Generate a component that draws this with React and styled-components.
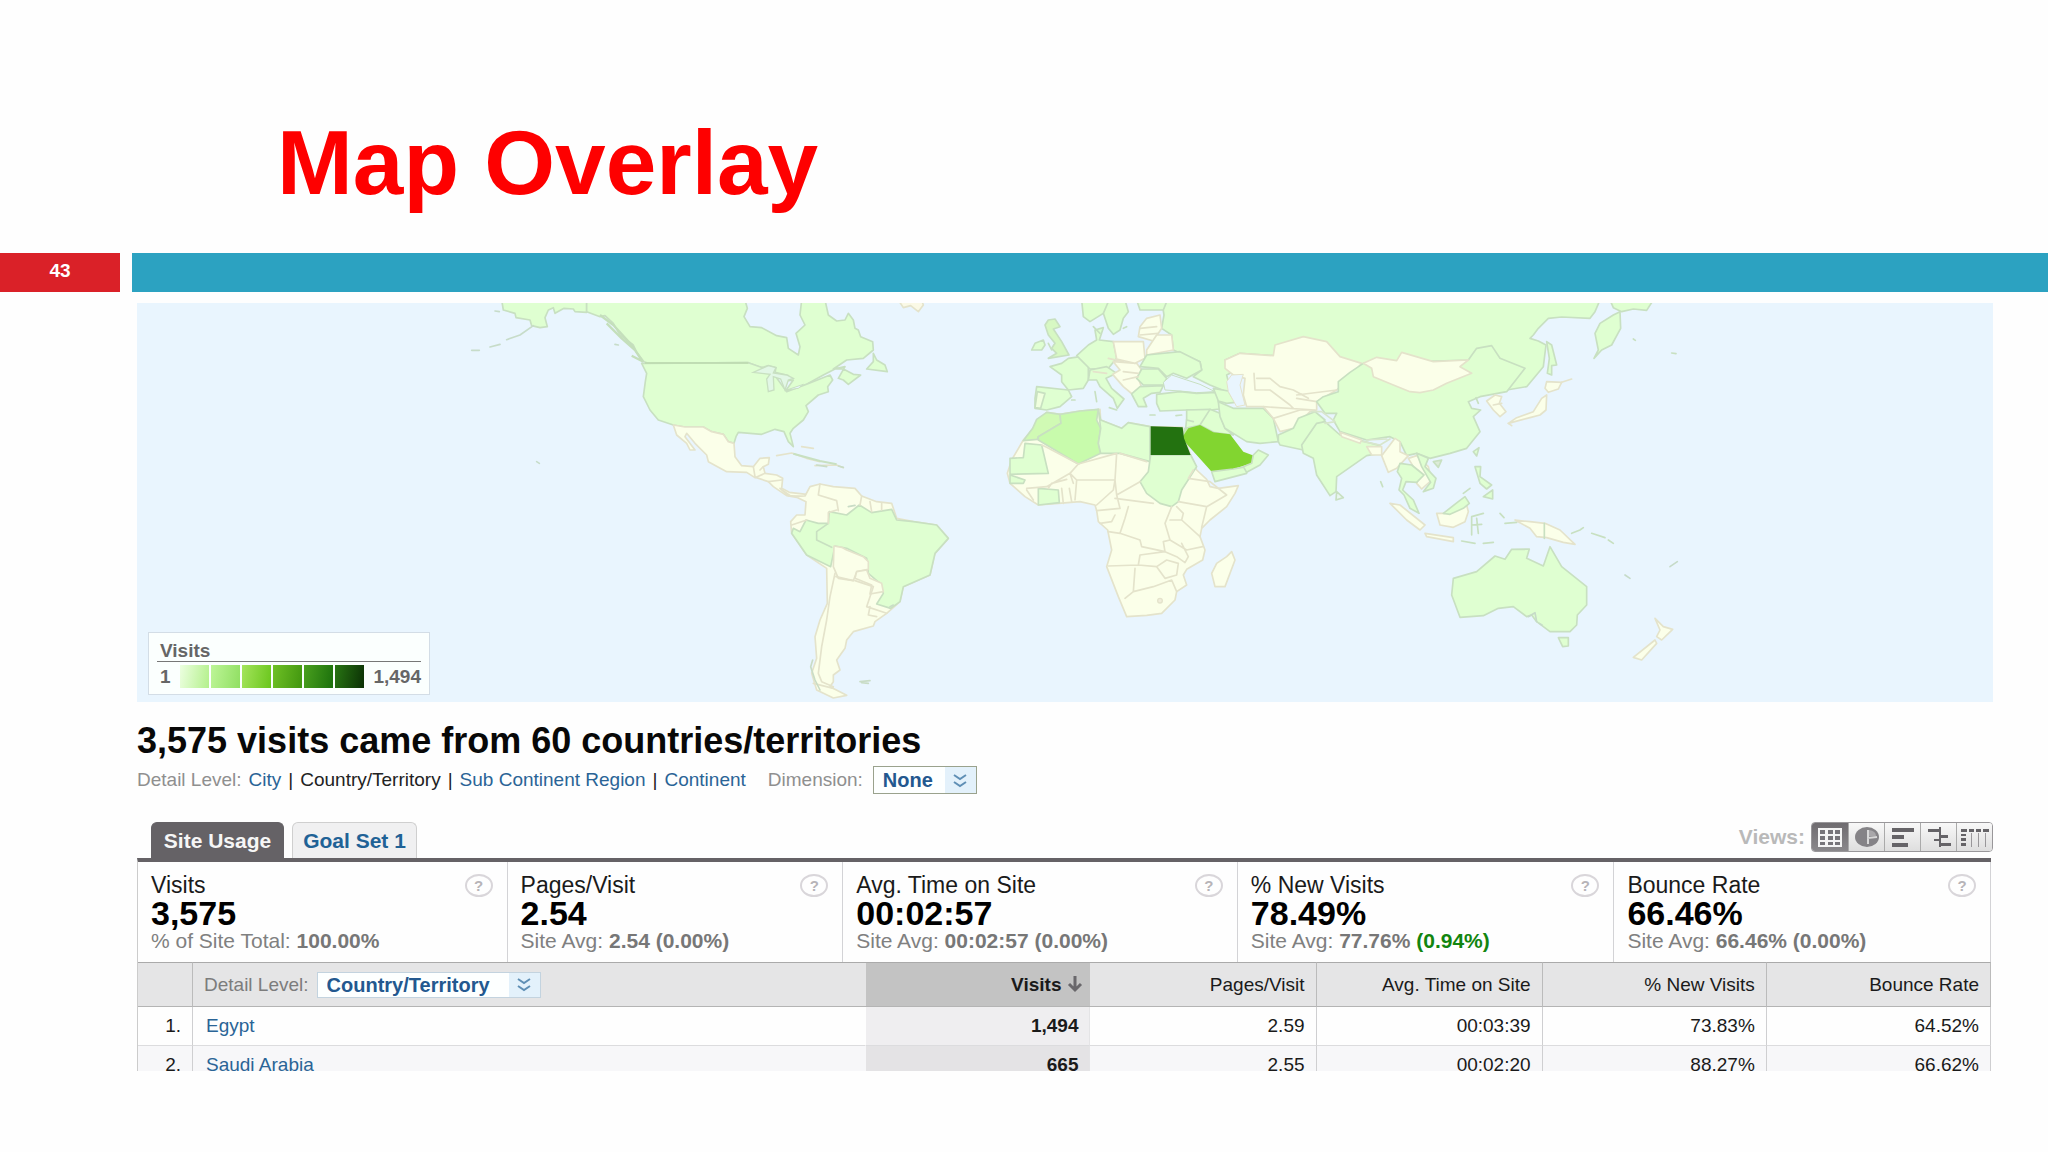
import React from "react";
import styled, { createGlobalStyle } from "styled-components";

const GlobalStyle = createGlobalStyle`
  *, *::before, *::after { box-sizing: border-box; }
  body { margin: 0; background: #fefefe; color: #1a1a1a; font-family: "Liberation Sans", Arial, sans-serif; }
  button, select { font: inherit; }
`;

const Title = styled.h1`
  margin: 0;
  padding: 111px 0 38px 277px;
  font-weight: 700;
  font-size: 91px;
  line-height: 104px;
  color: #fe0000;
`;

const Ribbon = styled.div`
  display: grid;
  grid-template-columns: 120px 1fr;
  gap: 12px;
  height: 39px;
`;

const PageNumber = styled.div`
  background: #da2128;
  color: #fff;
  padding-top: 7px;
  text-align: center;
  font-weight: 700;
  font-size: 19px;
  line-height: 22px;
`;

const RibbonBar = styled.div`
  background: #2ca2c1;
`;

const Report = styled.main`
  padding: 11px 55px 0 137px;
`;

const MapFrame = styled.section`
  display: grid;
  background: #e9f5fe;
  & > * { grid-area: 1 / 1; }
`;

const MapDrawing = styled.svg`
  display: block;
  width: 100%;
  height: auto;
`;

const Legend = styled.div`
  align-self: end;
  justify-self: start;
  width: 282px;
  margin: 0 0 7px 11px;
  padding: 8px 8px 6px;
  background: #fbfffe;
  border: 1px solid #d3dde6;
  color: #666;
  font-weight: 700;
  font-size: 19px;
  line-height: 20px;
`;

const LegendTitle = styled.div`
  padding: 0 3px;
  border-bottom: 1px solid #777;
`;

const LegendScale = styled.div`
  display: flex;
  align-items: center;
  justify-content: space-between;
  padding: 3px 0 0 3px;
`;

const Swatches = styled.div`
  display: flex;
  gap: 2px;
`;

const Swatch = styled.span`
  width: 29px;
  height: 23px;
  background: linear-gradient(100deg, ${(p) => p.$from}, ${(p) => p.$to});
`;

const Headline = styled.h2`
  margin: 20px 0 0;
  font-size: 36px;
  line-height: 38px;
  font-weight: 700;
  color: #080808;
`;

const DetailBar = styled.nav`
  display: flex;
  align-items: center;
  height: 28px;
  margin-top: 6px;
  gap: 7px;
  font-size: 19px;
  line-height: 20px;
  color: #222;
`;

const Muted = styled.span`
  color: #8f8f8f;
`;

const Link = styled.a`
  color: #2a6496;
  text-decoration: none;
`;

const Dimension = styled.label`
  display: flex;
  align-items: center;
  gap: 10px;
  margin-left: 15px;
  color: #8f8f8f;
`;

const SelectBox = styled.span`
  display: inline-grid;
  grid-template-columns: 1fr 31px;
  align-items: stretch;
  width: ${(p) => p.$width};
  height: ${(p) => p.$height};
  border: ${(p) => p.$border};
  background: linear-gradient(to left, #e3f1fb 31px, #fdffff 31px);
  & > select {
    grid-area: 1 / 1 / 2 / 3;
    appearance: none;
    border: 0;
    padding: 0 31px 0 9px;
    background: transparent;
    color: #23588f;
    font-weight: 700;
    font-size: 20px;
    line-height: 22px;
  }
  & > svg {
    grid-area: 1 / 2;
    place-self: center;
    pointer-events: none;
  }
`;

const TabBar = styled.div`
  display: flex;
  align-items: flex-start;
  justify-content: space-between;
  height: 36px;
  margin: 28px 0 0;
  padding-left: 14px;
`;

const Tabs = styled.div`
  display: flex;
  gap: 8px;
`;

const Tab = styled.button`
  width: ${(p) => (p.$active ? "133px" : "125px")};
  height: 36px;
  padding: 0;
  border: 1px solid ${(p) => (p.$active ? "#656266" : "#cfcfcf")};
  border-bottom: 0;
  border-radius: 6px 6px 0 0;
  background: ${(p) => (p.$active ? "#656266" : "#f0f0f1")};
  color: ${(p) => (p.$active ? "#f6f6f6" : "#1f6296")};
  font-weight: 700;
  font-size: 21px;
`;

const Views = styled.div`
  display: flex;
  align-items: center;
  gap: 6px;
  font-weight: 700;
  font-size: 21px;
  color: #b9b9b9;
`;

const ViewButtons = styled.div`
  display: flex;
  border: 1px solid #99979a;
  border-radius: 4px;
  overflow: hidden;
`;

const ViewButton = styled.button`
  display: grid;
  place-items: center;
  width: 36px;
  height: 28px;
  padding: 0;
  border: 0;
  border-left: ${(p) => (p.$first ? "0" : "1px solid #aaa")};
  background: ${(p) => (p.$active ? "linear-gradient(#6f6c70, #8a888b)" : "linear-gradient(#f8f8f8, #dedede)")};
`;

const DataPanel = styled.section`
  margin-right: 2px;
`;

const Cards = styled.div`
  display: grid;
  grid-template-columns: 370fr 336fr 395fr 377fr 377fr;
  height: 104px;
  border-top: 4px solid #656266;
  border-left: 1px solid #ccc;
`;

const Card = styled.article`
  display: grid;
  grid-template-columns: 1fr 28px;
  align-content: start;
  align-items: center;
  padding: 11px 14px 0 13px;
  border-right: 1px solid #d3d3d6;
  white-space: nowrap;
`;

const CardLabel = styled.div`
  font-size: 23px;
  line-height: 25px;
`;

const CardValue = styled.div`
  grid-column: 1 / 3;
  font-size: 34px;
  line-height: 30px;
  font-weight: 700;
  color: #000;
`;

const CardNote = styled.div`
  grid-column: 1 / 3;
  font-size: 21px;
  line-height: 26px;
  color: #808080;
`;

const Strong = styled.b`
  font-weight: 700;
  color: ${(p) => (p.$good ? "#12850f" : "#777")};
`;

const HelpButton = styled.button`
  width: 28px;
  height: 23px;
  padding: 0;
  border: 2px solid #d9d6da;
  border-radius: 50%;
  background: none;
  color: #b7b4b8;
  font-weight: 700;
  font-size: 15px;
  line-height: 18px;
`;

const TableClip = styled.div`
  max-height: 109px;
  overflow: hidden;
`;

const Table = styled.table`
  width: 100%;
  table-layout: fixed;
  border-collapse: separate;
  border-spacing: 0;
  border-left: 1px solid #ccc;
  font-size: 19px;
  line-height: 20px;
`;

const Col = styled.col`
  width: ${(p) => p.$width};
`;

const HeadCell = styled.th`
  height: 45px;
  padding: 0 11px;
  text-align: ${(p) => (p.$left ? "left" : "right")};
  font-weight: ${(p) => (p.$sorted ? 700 : 400)};
  background: ${(p) => (p.$sorted ? "#c3c3c3" : "#e5e5e6")};
  border-top: 1px solid #aaa;
  border-bottom: 1px solid #b4b4b4;
  border-right: ${(p) => (p.$divided ? "1px solid #bbb" : "0")};
  white-space: nowrap;
`;

const SortedLabel = styled.span`
  display: inline-flex;
  align-items: center;
  gap: 6px;
  margin-right: -4px;
`;

const DetailPicker = styled.label`
  display: flex;
  align-items: center;
  gap: 8px;
  color: #7c7c7c;
`;

const Cell = styled.td`
  height: 39px;
  padding: 0 11px;
  text-align: right;
  font-weight: ${(p) => (p.$sorted ? 700 : 400)};
  background: ${(p) => (p.$sorted ? (p.$odd ? "#e4e3e5" : "#efeef0") : p.$odd ? "#f7f7f9" : "#fefefe")};
  border-bottom: 1px solid #dcdcde;
  border-right: 1px solid ${(p) => (p.$sorted ? "#e4e4e6" : "#cfcfd1")};
`;

const PlaceCell = styled(Cell)`
  padding-left: 13px;
  text-align: left;
  border-right-color: transparent;
`;

const GREEN = "#dfffd1";
const PALE = "#fbffe9";
const EDGE = "#c8e0c1";
const SAND = "#e4e3cb";

const Land = ({ d, fill = GREEN, stroke }) => (
  <path d={d} fill={fill} stroke={stroke || (fill === PALE ? SAND : EDGE)} strokeWidth="5" strokeLinejoin="round" />
);
const Border = ({ d, stroke = SAND }) => (
  <path d={d} fill="none" stroke={stroke} strokeWidth="5" strokeLinejoin="round" strokeLinecap="round" />
);
const Region = ({ x, y, children }) => <g transform={`translate(${x} ${y}) scale(0.33333)`}>{children}</g>;

function NorthAmerica() {
  return (
    <Region x={440} y={295}>
      <Land d="M185 15L190 45L225 55L228 68L270 75L275 92L300 98L322 95L315 68L325 45L340 38L345 55L372 40L400 42L405 50L440 52L440 15Z" />
      <Land d="M440 15L440 50L480 65L495 62L520 85L540 120L580 150L590 172L612 200L625 205L925 203L965 218L985 212L1008 218L1005 232L1045 242L1040 258L1060 255L1035 290L1100 268L1150 240L1185 222L1210 222L1240 238L1262 240L1225 268L1210 255L1195 250L1215 215L1180 222L1220 195L1270 190L1300 165L1298 140L1262 125L1255 105L1245 100L1240 75L1225 55L1215 75L1190 78L1165 60L1155 15L1085 15L1080 60L1095 90L1068 115L1080 155L1075 180L1045 160L1040 128L1010 122L965 98L930 95L912 65L922 40L915 15Z" />
      <Land d="M605 205L925 203L968 218L1000 235L1040 290L1100 268L1170 240L1178 255L1163 275L1165 290L1135 300L1098 332L1105 350L1090 375L1060 400L1050 415L1060 455L1045 440L1032 410L1005 403L965 418L895 412L888 425L882 445L865 440L850 418L815 410L790 396L735 396L700 390L655 375L630 345L610 305L616 260L620 235Z" />
      <Land d="M1300 175L1310 195L1335 210L1342 230L1280 222L1300 200Z" />
      <path d="M940 232L985 212L1008 218L1000 234L1040 240L1060 250L1045 255L1035 285L1022 252L1000 245L1002 285L985 290L980 252L990 238Z" fill="#e2f7e6" stroke={EDGE} strokeWidth="4" />
      <path d="M1040 285L1090 268L1075 280Z" fill="#e9f5fe" stroke={EDGE} strokeWidth="3" />
      <path d="M615 204H925" stroke="#bddbae" strokeWidth="5" />
      <path d="M480 60L520 90L575 150L608 200M500 85L545 130L585 165M575 182L610 200" fill="none" stroke="#c4dfbb" strokeWidth="7" strokeLinejoin="round" />
      <Border d="M280 92L240 120L200 134M180 148L150 156M118 166L95 166M178 50L165 48M290 500L298 505M525 148L535 150" stroke="#c7dcc9" />
      <Land fill={PALE} d="M700 390L735 396L790 396L815 410L850 418L865 440L882 445L885 485L905 512L940 515L960 490L988 488L985 508L970 515L975 535L1010 540L1028 550L1025 580L1048 592L1100 598L1095 605L1040 602L1000 575L985 560L940 545L920 532L860 530L805 500L800 480L765 445L740 415L735 425L765 465L750 465L740 445L710 420Z" />
      <Border d="M940 515L945 545M975 535L945 548M960 525L970 515M985 560L1025 555M1010 482L1055 474L1100 490L1140 500M1125 512L1190 510L1210 518M1085 455L1120 460" />
      <path d="M1060 476L1140 498L1190 508" fill="none" stroke={EDGE} strokeWidth="6" />
      <Land fill="#faf9e6" stroke={SAND} d="M1375 15L1390 38L1412 32L1435 50L1450 30L1445 15Z" />
    </Region>
  );
}

function SouthAmerica() {
  return (
    <Region x={700} y={460}>
      <Land fill={PALE} d="M240 85L275 110L315 108L330 80L360 72L400 80L465 85L485 108L530 125L575 130L590 175L640 185L710 195L745 235L705 280L690 345L610 380L600 425L560 460L525 485L520 498L460 515L440 540L435 565L410 600L420 630L400 645L400 665L390 680L440 706L400 714L350 690L335 640L350 595L345 530L360 480L382 430L380 325L320 285L275 220L272 185L290 165L315 165L318 125L290 112L265 108Z" />
      <Land d="M318 180L355 190L385 190L388 155L440 165L478 135L515 158L575 148L590 180L640 185L710 195L745 235L705 280L690 345L610 380L600 425L572 445L530 432L550 400L540 370L505 340L500 295L440 265L405 258L392 320L320 285L275 220L280 205L300 215Z" />
      <Land fill={PALE} d="M402 258L425 262L440 270L490 290L505 305L505 328L470 335L460 362L415 355L400 320Z" />
      <Land fill={PALE} d="M470 335L500 330L510 355L545 370L550 395L510 402L515 375L465 355Z" />
      <Border d="M385 190L350 215L350 240L395 262" stroke={EDGE} />
      <Border d="M360 72L355 105L410 122L415 152M385 190L385 158L410 150M485 108L480 135M510 125L515 155M545 130L545 150M275 195L320 180M405 340L390 410L380 480L365 560L355 640L365 665L400 680M408 350L460 362M465 362L520 380L500 440L560 460M510 440L505 465L530 470M340 670L400 685" />
      <Border d="M338 600L332 620L345 660L360 690M480 665L510 662M485 668L505 670M445 140L465 136M350 15L380 20M415 18L430 22M570 440L580 435" stroke="#c9dcc6" />
    </Region>
  );
}

function Africa() {
  return (
    <Region x={980} y={440}>
      <Land fill={PALE} d="M200 -83L240 -77L300 -87L360 -92L362 -60L400 -45L425 -35L445 -52L510 -40L608 -38L612 -5L632 45L650 90L680 118L690 140L715 145L775 137L765 160L740 200L690 240L665 265L660 290L675 330L668 360L620 388L610 405L620 435L590 455L585 480L545 520L500 526L440 530L415 470L380 380L395 330L383 270L355 245L350 212L345 195L300 185L235 190L175 195L135 170L90 130L82 100L95 60L130 0L160 -35Z" />
      <Land fill="#d0fab4" d="M200 -83L240 -77L243 -50L175 -10L172 -2L130 2L158 -35L170 -62Z" />
      <Land fill="#c8fbac" d="M240 -77L300 -87L355 -92L350 -60L362 -35L355 10L362 40L295 72L175 0L175 -10L243 -50Z" />
      <Land d="M355 -92L362 -60L400 -45L425 -35L445 -52L510 -40L510 65L420 40L362 40L355 10L362 -35Z" />
      <Land d="M135 10L185 15L205 100L90 103L90 55L130 53Z" />
      <Land d="M90 105L135 120L130 130L90 130Z" />
      <Land d="M175 145L235 150L238 188L175 195Z" />
      <Land d="M512 45L632 45L650 80L605 150L595 185L575 200L540 190L500 160L480 125L505 95Z" />
      <Border d="M185 15L200 22L295 72L270 100L200 140L140 145M295 72L410 40L405 120L290 120L270 100L280 130M420 40L500 65M480 125L410 165L405 120M290 120L285 180M350 195L400 150L405 120M410 165L420 205L350 212M405 175L520 190M445 200L435 235L420 280L385 275M360 250L395 245L405 225M420 280L480 300L485 320L555 335L550 305L570 300L555 250L575 200M590 200L610 220L605 240L570 240M595 185L680 200L740 165L690 125L625 115L640 90M680 200L665 262M605 240L660 290M570 300L620 330L668 320M555 335L480 345L475 375L385 378M475 375L530 380L560 360L595 370L590 405L555 415L530 380M465 385L460 455L520 440L575 420L590 455M460 455L435 475M605 310L625 350L615 368L590 350L555 335M245 145L250 190M268 145L275 185M205 145L215 130L260 118M140 150L160 180" />
      <circle cx="540" cy="482" r="7" fill="#f1eedb" stroke={SAND} strokeWidth="4" />
      <Land fill={PALE} d="M755 335L765 360L735 440L705 440L695 400L710 370L740 350Z" />
    </Region>
  );
}

function EuropeAndMiddleEast() {
  return (
    <Region x={980} y={295}>
      <Land d="M545 15L552 60L545 100L575 120L580 165L660 200L665 225L640 245L690 270L740 290L760 320L740 240L750 235L735 195L780 175L880 182L900 170L1040 160L1150 235L1400 240L1580 260L1580 285L1640 275L1690 215L1698 150L1675 138L1650 130L1660 120L1675 100L1705 70L1745 66L1830 70L1845 50L1860 15Z" />
      <Land d="M205 75L225 72L240 95L220 102L245 140L267 180L205 190L230 175L215 160L225 145L205 120L195 90Z" fill="#d7f8c3" />
      <Land d="M165 145L190 135L195 150L185 165L155 165Z" />
      <Land d="M305 15L310 65L330 80L370 55L385 100L400 118L420 105L430 70L445 50L435 15Z" />
      <Border d="M370 55L385 20" stroke={EDGE} />
      <Land d="M470 15L480 45L550 45L562 15Z" />
      <Land d="M170 275L265 285L275 305L240 335L200 345L165 340L165 310Z" />
      <Land fill="#f0ffdf" d="M172 290L195 295L182 340L165 338Z" />
      <Land d="M265 285L245 260L245 240L210 215L245 205L265 190L300 185L325 200L325 255L310 280Z" />
      <Land d="M290 182L325 150L350 135L345 105L370 98L358 135L400 140L410 190L385 220L330 222Z" />
      <Land d="M330 225L380 215L410 235L378 250L395 280L432 312L412 340L400 310L360 275L350 255L325 255Z" />
      <Land fill={PALE} d="M400 200L470 205L485 225L475 250L490 292L460 300L430 275L398 238L420 225Z" />
      <Land fill={PALE} d="M400 140L490 140L495 190L465 205L410 192Z" />
      <Land fill={PALE} d="M500 70L540 60L545 100L520 138L475 125L480 95Z" />
      <Land fill={PALE} d="M500 165L530 120L575 120L580 165L500 180Z" />
      <Land d="M500 180L600 170L660 200L665 225L620 250L580 235L560 245L535 220L480 215Z" />
      <Land d="M485 222L535 222L560 250L550 270L490 270L470 250Z" />
      <Land d="M455 297L480 275L550 272L540 292L515 295L490 310L500 335L475 335Z" />
      <Border d="M480 100L530 95M480 120L535 115M385 190L430 200M430 230L475 235M430 255L475 245M340 230L380 235" />
      <Border d="M345 290L350 320M388 338L410 345M510 360L525 360M588 362L605 360M340 95L360 115M275 315L285 315M430 100L440 95M205 145L215 165" stroke={EDGE} />
      <path d="M555 285L550 262L575 240L620 255L660 268L705 290L650 293L600 288Z" fill="#e9f5fe" stroke={EDGE} strokeWidth="3" />
      <Land d="M530 298L600 290L650 295L710 292L720 342L690 345L620 345L540 348L530 325Z" />
      <Land d="M700 280L745 288L765 322L740 325L715 318Z" />
      <Land d="M620 345L690 343L720 355L735 400L760 420L700 412L660 390L635 400L615 420L620 370Z" />
      <Border d="M660 390L690 343M620 375L640 380" stroke={EDGE} />
      <Land d="M715 320L760 340L850 340L880 370L895 440L840 445L800 440L760 415L735 400L720 365Z" />
      <Land fill={PALE} d="M735 195L780 175L880 182L885 150L970 125L1040 140L1080 185L1145 205L1110 245L1070 285L1010 320L1010 345L990 350L940 400L900 410L880 370L850 335L800 335L790 300L795 250L760 240L735 220Z" />
      <path d="M755 240L790 238L780 270L795 330L770 335L745 290L740 260Z" fill="#e9f5fe" stroke={SAND} strokeWidth="3" />
      <Border d="M822 235L825 285L870 285L930 330L940 340M830 250L870 250L900 275L940 285L985 310M950 300L1070 285M950 310L1010 320M850 335L1005 345M880 370L960 345L1005 345" />
      <Land d="M1005 350L1035 375L970 450L970 465L900 450L895 440L895 420L940 400L955 370Z" />
      <Land fill="#c7eea8" d="M605 430L615 400L655 392L700 412L655 480Z" />
      <path d="M660 390L700 412L750 418L790 470L822 482L815 505L760 522L695 530L650 480L605 430L625 400Z" fill="#82d530" />
      <Land d="M695 530L760 522L800 515L800 535L705 560Z" />
      <Land d="M820 480L835 465L865 480L840 510L800 532L790 515L815 505Z" />
      <path d="M512 394L608 397L612 430L632 480L512 480Z" fill="#237210" />
    </Region>
  );
}

function Asia() {
  return (
    <Region x={1300} y={295}>
      <Land d="M190 205L505 195L530 160L575 152L600 190L675 220L620 290L540 305L505 320L515 340L542 345L520 365L540 410L500 460L450 475L390 490L350 475L320 482L300 440L270 425L200 435L120 410L100 375L110 355L75 355L50 320L70 305L115 290L115 260L150 232Z" />
      <Land fill={PALE} d="M190 205L230 187L290 197L305 172L400 200L505 195L480 215L515 235L440 265L400 285L360 293L330 290L280 270L220 245L215 220Z" />
      <Land d="M50 385L75 380L120 420L240 452L240 475L200 482L110 545L108 590L90 602L50 540L40 490L10 475L5 450Z" />
      <Border d="M35 350L65 350L105 380L75 385M120 415L190 440L240 450L270 432M200 435L260 432" stroke="#d8e6cc" />
      <Land fill="#e9f6f0" d="M110 590L130 608L108 615Z" />
      <Land fill={PALE} d="M120 412L185 435L180 445L125 425Z" />
      <Land fill={PALE} d="M200 455L245 455L245 480L215 480Z" />
      <Land fill={PALE} d="M285 430L300 440L300 470L325 482L290 520L265 532L245 482Z" />
      <Land fill={PALE} d="M325 490L350 482L385 515L395 555L365 582L350 565L360 540L340 515Z" />
      <Land d="M300 505L335 510L372 540L350 562L318 560L308 585L340 615L357 655L330 640L312 600L297 585L305 550L292 530Z" />
      <Land d="M350 475L385 490L375 515L408 550L400 580L370 590L392 562L365 515Z" />
      <Land fill="#dcecd8" d="M400 500L425 495L415 517Z" />
      <Land d="M520 470L537 458L530 483Z" />
      <Land fill={PALE} d="M560 318L585 300L605 305L598 325L618 350L600 365L580 345Z" />
      <Border d="M580 330L605 325" />
      <Land fill={PALE} d="M740 260L785 262L775 282L745 292L735 280ZM740 300L738 345L720 360L690 368L625 385L650 368L700 350L725 310Z" />
      <Border d="M785 262L815 252M625 385L635 392" />
      <Land d="M740 140L755 150L770 210L755 212L755 240L742 235L748 190Z" />
      <Land d="M960 50L962 100L935 150L905 165L882 190L895 165L885 115L900 85L940 60Z" />
      <Land d="M930 15L940 38L965 50L1000 42L1040 46L1060 15Z" />
      <Border d="M1115 174L1128 176M1000 132L1006 136M528 308L535 325M242 560L248 575" stroke={EDGE} />
      <Land d="M525 515L542 515L540 545L575 570L560 582L540 565Z" />
      <Land d="M550 605L578 585L578 612Z" />
      <Land fill={PALE} d="M270 625L300 630L375 690L360 705L320 675Z" />
      <Land fill={PALE} d="M375 715L460 728L460 740L380 725Z" />
      <Land fill={PALE} d="M410 655L435 655L470 635L500 630L505 650L495 680L460 697L420 690Z" />
      <Land d="M430 655L475 620L495 605L508 625L490 640L450 658Z" />
      <Border d="M490 595L510 580M515 720L515 665L550 655M530 670L535 715M515 690L545 688M485 738L525 745M550 745L580 742M600 655L612 668M615 685L650 682" stroke={EDGE} />
      <Land fill={PALE} d="M645 675L690 680L735 685L780 705L825 748L790 742L740 728L710 725L690 700Z" />
      <Border d="M733 685V730M815 715L840 705L850 698M875 715L915 728M925 735L940 745" stroke={EDGE} />
    </Region>
  );
}

function Oceania() {
  return (
    <Region x={1340} y={470}>
      <Land d="M340 325L410 305L465 258L495 268L515 238L568 237L560 265L610 288L630 230L665 290L740 350L740 405L712 435L710 465L690 485L630 485L590 455L575 435L560 440L520 410L475 415L430 437L360 442L335 375Z" />
      <Land d="M655 503L685 503L685 528L668 530Z" />
      <Land fill={PALE} d="M945 445L970 470L998 478L965 510L950 500L960 480ZM945 510L950 520L905 570L880 562Z" />
      <Border d="M855 315L870 325M990 290L1012 275M565 440L585 428L590 455M598 460L606 465" stroke="#c6dbc8" />
    </Region>
  );
}

const Chevrons = () => (
  <svg width="16" height="15" viewBox="0 0 16 15" fill="none" stroke="#5f8fb5" strokeWidth="2" aria-hidden="true">
    <path d="M2 2L8 6L14 2M2 9L8 13L14 9" />
  </svg>
);

const GridIcon = () => (
  <svg width="24" height="19" viewBox="0 0 24 19" aria-hidden="true">
    <path d="M0 0H24V19H0Z" fill="#f5f5f5" />
    <path d="M2 2h5v4H2zM10 2h5v4h-5zM17 2h5v4h-5zM2 8h5v4H2zM10 8h5v4h-5zM17 8h5v4h-5zM2 14h5v3H2zM10 14h5v3h-5zM17 14h5v3h-5z" fill="#77757a" />
  </svg>
);
const PieIcon = () => (
  <svg width="24" height="20" viewBox="0 0 24 20" aria-hidden="true">
    <ellipse cx="12" cy="10" rx="12" ry="10" fill="#858387" />
    <path d="M14 3Q21 4 21 9H14Z" fill="#a9a7aa" />
    <path d="M13 3V11L22 10M13 11V17" fill="none" stroke="#d9d9d9" strokeWidth="2" />
  </svg>
);
const BarsIcon = () => (
  <svg width="24" height="20" viewBox="0 0 24 20" fill="#656367" aria-hidden="true">
    <path d="M1 1H23V5H1ZM1 8H13V12H1ZM1 16H17V20H1Z" />
  </svg>
);
const CompareIcon = () => (
  <svg width="24" height="20" viewBox="0 0 24 20" fill="#656367" aria-hidden="true">
    <path d="M1 2H14V5H1ZM12 0H14V20H12ZM14 8H21V11H14ZM7 12H12V14H7ZM14 16H24V19H14Z" />
  </svg>
);
const PivotIcon = () => (
  <svg width="28" height="19" viewBox="0 0 28 19" fill="#656367" aria-hidden="true">
    <path d="M0 1h6v3H0zM8 1h5v3H8zM15 1h5v3h-5zM22 1h6v3h-6zM0 6h5v2H0zM0 10h5v3H0zM0 15h5v3H0z" />
    <path d="M10 5h1v14h-1zM17 5h1v14h-1zM24 5h1v14h-1z" opacity=".6" />
  </svg>
);
const SortArrow = () => (
  <svg width="16" height="17" viewBox="0 0 16 17" fill="none" stroke="#69676b" strokeWidth="3" aria-hidden="true">
    <path d="M8 0V14M2 8L8 14L14 8" />
  </svg>
);

const swatches = [
  ["#ecffe0", "#b3f08b"],
  ["#bdf597", "#90df62"],
  ["#a4e45c", "#6ac61c"],
  ["#6fc025", "#41960f"],
  ["#4aa01e", "#1b700c"],
  ["#287513", "#0b3005"],
];

const cards = [
  { label: "Visits", value: "3,575", note: "% of Site Total:", avg: "100.00%" },
  { label: "Pages/Visit", value: "2.54", note: "Site Avg:", avg: "2.54 (0.00%)" },
  { label: "Avg. Time on Site", value: "00:02:57", note: "Site Avg:", avg: "00:02:57 (0.00%)" },
  { label: "% New Visits", value: "78.49%", note: "Site Avg:", avg: "77.76%", good: "(0.94%)" },
  { label: "Bounce Rate", value: "66.46%", note: "Site Avg:", avg: "66.46% (0.00%)" },
];

const rows = [
  ["Egypt", "1,494", "2.59", "00:03:39", "73.83%", "64.52%"],
  ["Saudi Arabia", "665", "2.55", "00:02:20", "88.27%", "66.62%"],
];

const views = [
  ["Table", GridIcon],
  ["Percentage", PieIcon],
  ["Performance", BarsIcon],
  ["Comparison", CompareIcon],
  ["Pivot", PivotIcon],
];

export default function App() {
  return (
    <>
      <GlobalStyle />
      <Title>Map Overlay</Title>
      <Ribbon>
        <PageNumber>43</PageNumber>
        <RibbonBar />
      </Ribbon>
      <Report>
        <MapFrame>
          <MapDrawing viewBox="137 303 1856 399" role="img" aria-label="World map of visits">
            <NorthAmerica />
            <SouthAmerica />
            <Africa />
            <EuropeAndMiddleEast />
            <Asia />
            <Oceania />
          </MapDrawing>
          <Legend>
            <LegendTitle>Visits</LegendTitle>
            <LegendScale>
              <span>1</span>
              <Swatches>
                {swatches.map(([from, to]) => (
                  <Swatch key={from} $from={from} $to={to} />
                ))}
              </Swatches>
              <span>1,494</span>
            </LegendScale>
          </Legend>
        </MapFrame>

        <Headline>3,575 visits came from 60 countries/territories</Headline>
        <DetailBar>
          <Muted>Detail Level:</Muted>
          <Link href="#city">City</Link>
          <span>|</span>
          <span>Country/Territory</span>
          <span>|</span>
          <Link href="#sub-continent">Sub Continent Region</Link>
          <span>|</span>
          <Link href="#continent">Continent</Link>
          <Dimension>
            Dimension:
            <SelectBox $width="104px" $height="28px" $border="1px solid #9aa28d">
              <select defaultValue="None">
                <option>None</option>
              </select>
              <Chevrons />
            </SelectBox>
          </Dimension>
        </DetailBar>

        <TabBar>
          <Tabs>
            <Tab $active>Site Usage</Tab>
            <Tab>Goal Set 1</Tab>
          </Tabs>
          <Views>
            Views:
            <ViewButtons>
              {views.map(([name, Icon], i) => (
                <ViewButton key={name} aria-label={name} $active={i === 0} $first={i === 0}>
                  <Icon />
                </ViewButton>
              ))}
            </ViewButtons>
          </Views>
        </TabBar>

        <DataPanel>
          <Cards>
            {cards.map((c) => (
              <Card key={c.label}>
                <CardLabel>{c.label}</CardLabel>
                <HelpButton>?</HelpButton>
                <CardValue>{c.value}</CardValue>
                <CardNote>
                  {c.note} <Strong>{c.avg}</Strong>
                  {c.good && <Strong $good> {c.good}</Strong>}
                </CardNote>
              </Card>
            ))}
          </Cards>

          <TableClip>
            <Table>
              <colgroup>
                <Col $width="55px" />
                <Col />
                <Col $width="12.1%" />
                <Col $width="12.2%" />
                <Col $width="12.2%" />
                <Col $width="12.1%" />
                <Col $width="12.1%" />
              </colgroup>
              <thead>
                <tr>
                  <HeadCell $divided />
                  <HeadCell $left>
                    <DetailPicker>
                      Detail Level:
                      <SelectBox $width="224px" $height="26px" $border="1px solid #c3d3df">
                        <select defaultValue="Country/Territory">
                          <option>Country/Territory</option>
                        </select>
                        <Chevrons />
                      </SelectBox>
                    </DetailPicker>
                  </HeadCell>
                  <HeadCell $sorted>
                    <SortedLabel>
                      Visits
                      <SortArrow />
                    </SortedLabel>
                  </HeadCell>
                  <HeadCell $divided>Pages/Visit</HeadCell>
                  <HeadCell $divided>Avg. Time on Site</HeadCell>
                  <HeadCell $divided>% New Visits</HeadCell>
                  <HeadCell $divided>Bounce Rate</HeadCell>
                </tr>
              </thead>
              <tbody>
                {rows.map(([country, ...values], i) => (
                  <tr key={country}>
                    <Cell $odd={i % 2 === 1}>{i + 1}.</Cell>
                    <PlaceCell $odd={i % 2 === 1}>
                      <Link href={`#${country}`}>{country}</Link>
                    </PlaceCell>
                    {values.map((v, j) => (
                      <Cell key={j} $sorted={j === 0} $odd={i % 2 === 1}>
                        {v}
                      </Cell>
                    ))}
                  </tr>
                ))}
              </tbody>
            </Table>
          </TableClip>
        </DataPanel>
      </Report>
    </>
  );
}
